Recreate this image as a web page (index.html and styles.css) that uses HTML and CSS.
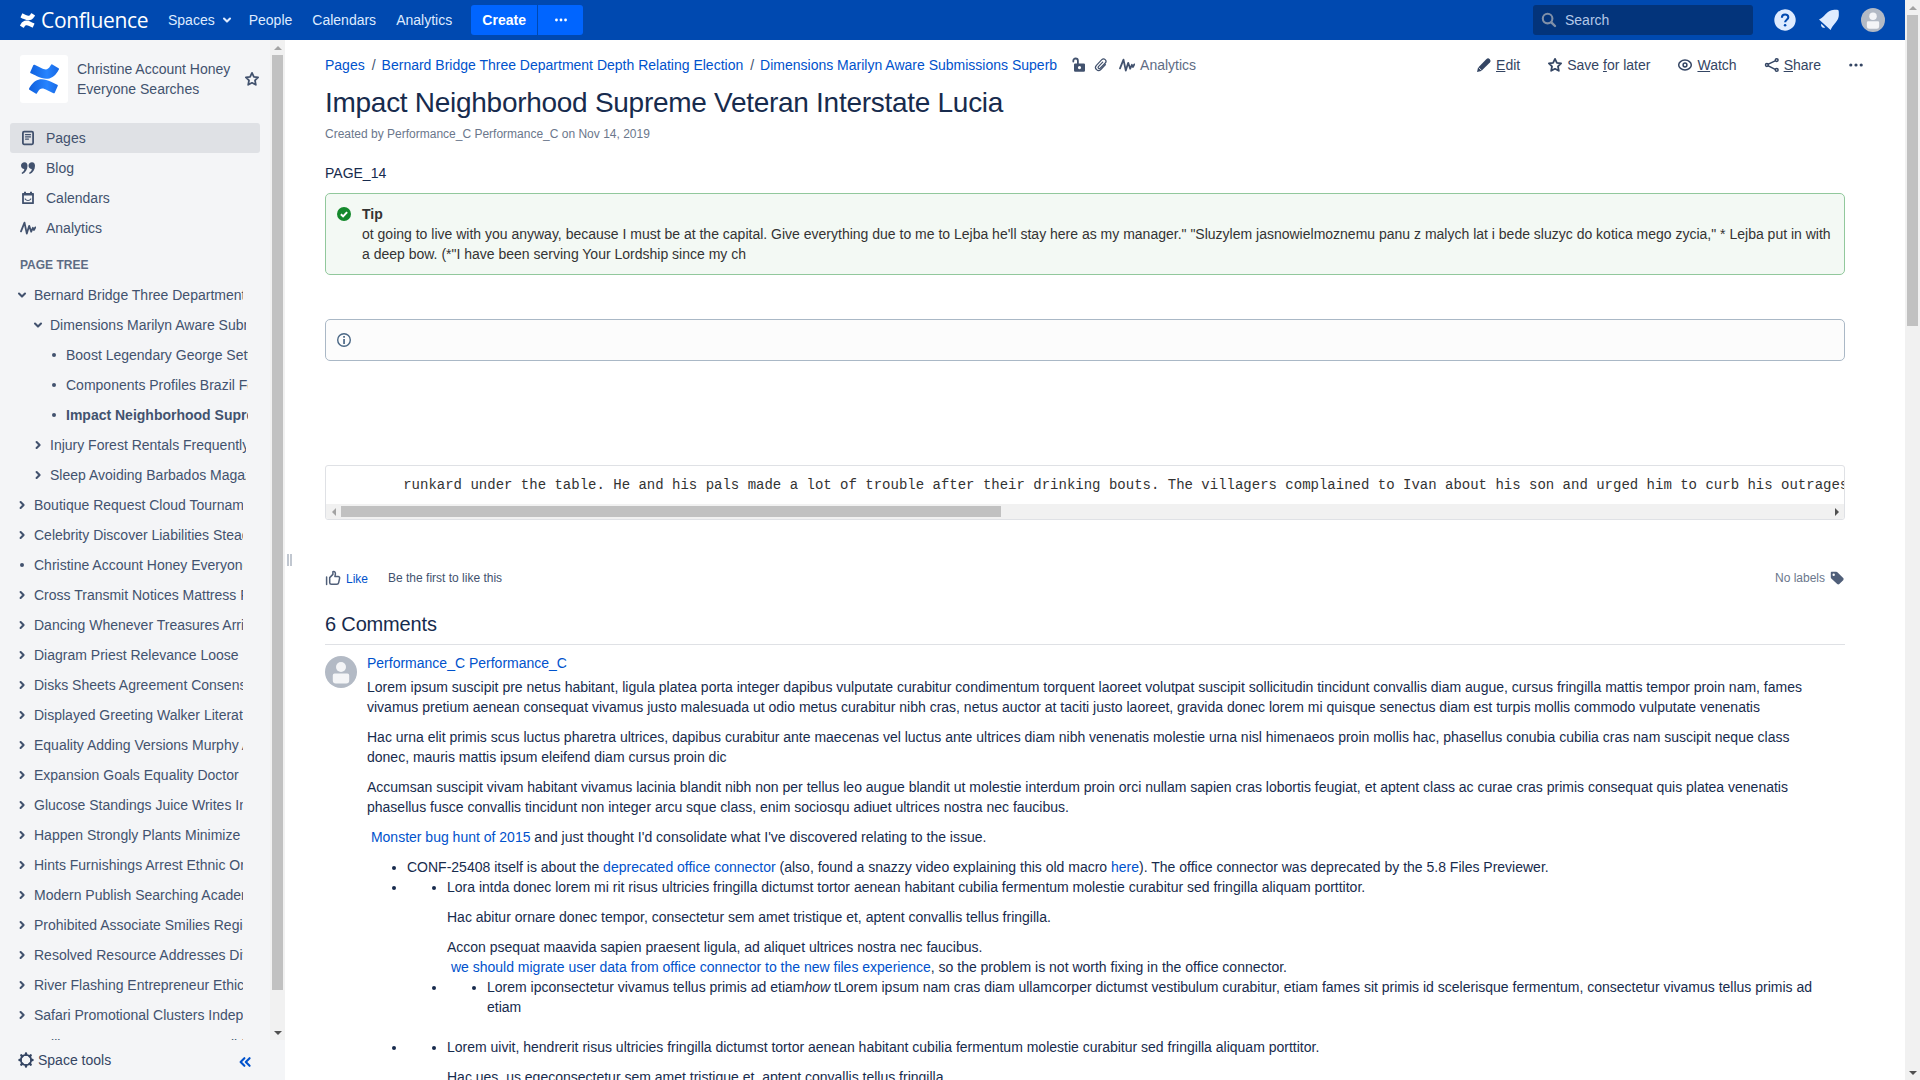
FILE: index.html
```
<!DOCTYPE html>
<html lang="en">
<head>
<meta charset="utf-8">
<title>Impact Neighborhood Supreme Veteran Interstate Lucia - Confluence</title>
<link rel="stylesheet" href="styles.css">
</head>
<body>
<svg class="defs" aria-hidden="true">
  <defs>
    <linearGradient id="blueTop" x1="0" x2="1"><stop offset="0" stop-color="#0f5fdc"/><stop offset=".6" stop-color="#2684ff"/><stop offset="1" stop-color="#1868e3"/></linearGradient>
    <symbol id="confluence" viewBox="0 0 24 24"><path d="M.87 18.257c-.248.382-.53.875-.763 1.245a.764.764 0 0 0 .255 1.04l4.965 3.054a.764.764 0 0 0 1.058-.26c.199-.332.454-.763.733-1.221 1.967-3.247 3.945-2.853 7.508-1.146l4.957 2.337a.764.764 0 0 0 1.028-.382l2.364-5.346a.764.764 0 0 0-.382-1 599.851 599.851 0 0 1-4.965-2.361C10.911 10.97 5.224 11.185.87 18.257zM23.131 5.743c.249-.405.531-.875.764-1.25a.764.764 0 0 0-.256-1.034L18.675.404a.764.764 0 0 0-1.058.26c-.195.335-.451.763-.734 1.225-1.966 3.246-3.945 2.85-7.508 1.146L4.437.694a.764.764 0 0 0-1.027.382L1.046 6.422a.764.764 0 0 0 .382 1c1.039.49 3.105 1.467 4.965 2.361 6.698 3.246 12.392 3.029 16.738-4.04z"/></symbol>
    <symbol id="down" viewBox="0 0 16 16"><path class="line bold" d="M5 6.600l3 3 3-3"/></symbol>
    <symbol id="right" viewBox="0 0 16 16"><path class="line bold" d="M6.600 5l3 3-3 3"/></symbol>
    <symbol id="dot" viewBox="0 0 16 16"><circle cx="8" cy="8" r="2"/></symbol>
    <symbol id="dots" viewBox="0 0 16 16"><circle cx="2.8" cy="8" r="1.6"/><circle cx="8" cy="8" r="1.6"/><circle cx="13.2" cy="8" r="1.6"/></symbol>
    <symbol id="star" viewBox="0 0 16 16"><path class="line" d="M8 1.9l1.9 3.9 4.2.6-3.1 3 .8 4.4L8 11.8l-3.8 2 .8-4.4-3.1-3 4.2-.6z"/></symbol>
    <symbol id="page" viewBox="0 0 16 16"><rect class="line" x="2.900" y="1.700" width="10.200" height="12.600" rx="1.200"/><path class="thin" d="M5.500 4.700h5M5.500 6.900h5M5.500 9.100h3"/></symbol>
    <symbol id="quote" viewBox="0 0 16 16"><path d="M4.500 2.200C6.500 2.200 7.500 3.700 7.500 5.800c0 3.800-2 6.900-5.200 8.200L1.500 12.900c1.700-1.100 2.700-2.300 2.800-3.900C2.500 9 1 7.700 1 5.600 1 3.600 2.600 2.200 4.500 2.200zM12 2.200c2 0 3 1.500 3 3.600 0 3.800-2 6.900-5.200 8.200L9 12.900c1.700-1.100 2.700-2.300 2.800-3.900-1.800 0-3.300-1.300-3.300-3.400 0-2 1.600-3.400 3.500-3.400z"/></symbol>
    <symbol id="calendar" viewBox="0 0 16 16"><path class="line" d="M3 4h10v9.200H3z"/><path d="M2.400 3.200h11.200v2.400H2.400zM4 1.800h2v2H4zM10 1.800h2v2h-2z"/><path class="thin" d="M5.200 9c1.200 2 4.400 2 5.600 0"/></symbol>
    <symbol id="wave" viewBox="0 0 16 16"><path class="line" d="M1 11.300L4.500 2.600 6.800 13.600 9.200 5.800l2 5.900 1.700-3.900 1 2.200 1.400-2.600"/></symbol>
    <symbol id="gear" viewBox="0 0 16 16"><circle class="line" cx="8" cy="8" r="5.200"/><path class="teeth" d="M8 1.500v1.200M8 13.300v1.200M1.500 8h1.200M13.300 8h1.200M3.300 3.300l1 1M11.700 11.700l1 1M3.300 12.700l1-1M11.700 4.300l1-1"/></symbol>
    <symbol id="collapse" viewBox="0 0 16 16"><path class="line bold" d="M7.400 4.200L3.600 8l3.800 3.800M12.600 4.200L8.800 8l3.800 3.800"/></symbol>
    <symbol id="search" viewBox="0 0 16 16"><circle class="line bold" cx="6.600" cy="6.600" r="4.800"/><path class="teeth" d="M10.600 10.600l3.400 3.400"/></symbol>
    <symbol id="lock" viewBox="0 0 16 16"><path class="line" d="M2.300 4.600V3.800a2.300 2.300 0 0 1 4.600 0V7"/><path fill-rule="evenodd" d="M4.200 6.400h8.600a1.200 1.200 0 0 1 1.200 1.200v6a1.200 1.200 0 0 1-1.200 1.200H4.200A1.200 1.200 0 0 1 3 13.600v-6a1.200 1.200 0 0 1 1.200-1.200zM8.500 9a1.600 1.600 0 1 0 0 3.200 1.600 1.600 0 0 0 0-3.200z"/></symbol>
    <symbol id="clip" viewBox="0 0 16 16"><path class="thin" d="M12.500 7.600L7.800 12.500a3 3 0 0 1-4.400-4.200l5.400-5.600a2.400 2.400 0 0 1 3.500 3.300L7.200 11.200a1.200 1.200 0 0 1-1.800-1.600l4.300-4.500"/></symbol>
    <symbol id="pencil" viewBox="0 0 16 16"><path d="M1 15l1-4.300L10.500 2.100a2.200 2.200 0 0 1 3.100 0l.3.300a2.200 2.200 0 0 1 0 3.100L5.300 14z"/><path d="M2.600 10.500l3 3" stroke="#fff" stroke-width=".8"/></symbol>
    <symbol id="eye" viewBox="0 0 16 16"><ellipse class="line fine" cx="8" cy="8" rx="6.300" ry="4.900"/><circle class="line fine" cx="8" cy="8" r="1.900"/></symbol>
    <symbol id="share" viewBox="0 0 16 16"><path class="line fine" d="M4.300 7.200l6.900-3.400M4.300 8.800l6.900 3.500"/><circle class="line fine" cx="2.900" cy="8" r="1.400"/><circle class="line fine" cx="12.700" cy="3.100" r="1.400"/><circle class="line fine" cx="12.700" cy="12.900" r="1.400"/></symbol>
    <symbol id="like" viewBox="0 0 16 16"><path class="line fine" d="M1.600 7v7.600M4.700 12.800V7.600L7.900 4.400V1.700c1.700-.7 2.700.8 2.500 2.300L9.900 6.600h3.200c1.300 0 1.700.9 1.500 1.800l-1 4.500c-.2.900-.8 1.400-1.700 1.400H6.400c-1 0-1.700-.6-1.700-1.500z"/></symbol>
    <symbol id="tag" viewBox="0 0 16 16"><path fill-rule="evenodd" d="M2.800 1.800h4.400c.5 0 .9.200 1.200.5l5.800 5.800c.6.600.6 1.500 0 2.100l-3.900 3.900c-.6.600-1.500.6-2.100 0L2.300 8.500a1.700 1.700 0 0 1-.5-1.200V2.800c0-.6.400-1 1-1zM4.700 3.500a1.200 1.200 0 1 0 0 2.400 1.200 1.200 0 0 0 0-2.400z"/></symbol>
    <symbol id="avatar" viewBox="0 0 32 32"><circle cx="16" cy="16" r="16" fill="#b3bac5"/><circle cx="16" cy="11" r="5" fill="#f4f5f7"/><path fill="#f4f5f7" d="M9.500 17.500h13a1.700 1.700 0 0 1 1.700 1.700v5.300a3 3 0 0 1-3 3H10.800a3 3 0 0 1-3-3v-5.300a1.700 1.700 0 0 1 1.700-1.700z"/></symbol>
  </defs>
</svg>

<div class="viewport">
  <div class="app">
    <header class="topbar">
      <a class="brand"><svg class="brand-mark"><use href="#confluence"/></svg><span>Confluence</span></a>
      <nav class="topnav">
        <a>Spaces<svg class="icon"><use href="#down"/></svg></a>
        <a>People</a><a>Calendars</a><a>Analytics</a>
      </nav>
      <div class="create"><a class="create-main">Create</a><a class="create-more"><svg class="icon"><use href="#dots"/></svg></a></div>
      <div class="tools">
        <div class="search"><svg class="icon"><use href="#search"/></svg><span>Search</span></div>
        <svg class="tool-icon help" viewBox="0 0 24 24"><circle cx="12" cy="12" r="10.700"/><path d="M8.900 9.700c0-4.300 6.400-4.200 6.400-.4 0 2.400-3.200 2.500-3.200 5" fill="none" stroke="#0049b0" stroke-width="2.100"/><circle cx="12.100" cy="17.300" r="1.300" fill="#0049b0"/></svg>
        <svg class="tool-icon bell" viewBox="0 0 24 24"><path d="M2 11.400C7.500 9.300 9 3.500 14.500 2.200c2-.5 3.700-.2 5.200-.4l1.600.3.500 1.600c-.1 1.500.3 3.200-.2 5.200-1.300 5.500-6 7.500-8 13.100zM4.400 15.800l3.800 3.600c-2.200 1.600-5-1.200-3.800-3.600z"/></svg>
        <svg class="tool-icon user"><use href="#avatar"/></svg>
      </div>
    </header>

    <div class="body">
      <aside class="sidebar">
        <div class="side-scroll">
          <div class="side-content">
            <div class="space">
              <div class="space-logo"><svg><use href="#confluence"/></svg></div>
              <div class="space-name">Christine Account Honey Everyone Searches</div>
              <svg class="icon"><use href="#star"/></svg>
            </div>
            <nav class="side-nav">
              <a class="selected"><svg class="icon"><use href="#page"/></svg>Pages</a>
              <a><svg class="icon"><use href="#quote"/></svg>Blog</a>
              <a><svg class="icon"><use href="#calendar"/></svg>Calendars</a>
              <a><svg class="icon"><use href="#wave"/></svg>Analytics</a>
            </nav>
            <h5 class="tree-title">PAGE TREE</h5>
            <div class="tree">
              <div class="node"><svg class="icon"><use href="#down"/></svg><span>Bernard Bridge Three Department Depth</span></div>
              <div class="node l1"><svg class="icon"><use href="#down"/></svg><span>Dimensions Marilyn Aware Submissions</span></div>
              <div class="node l2"><svg class="icon"><use href="#dot"/></svg><span>Boost Legendary George Settings</span></div>
              <div class="node l2"><svg class="icon"><use href="#dot"/></svg><span>Components Profiles Brazil Forum</span></div>
              <div class="node l2 current"><svg class="icon"><use href="#dot"/></svg><span>Impact Neighborhood Supreme Veteran</span></div>
              <div class="node l1"><svg class="icon"><use href="#right"/></svg><span>Injury Forest Rentals Frequently</span></div>
              <div class="node l1"><svg class="icon"><use href="#right"/></svg><span>Sleep Avoiding Barbados Magazine</span></div>
              <div class="node"><svg class="icon"><use href="#right"/></svg><span>Boutique Request Cloud Tournament</span></div>
              <div class="node"><svg class="icon"><use href="#right"/></svg><span>Celebrity Discover Liabilities Steady</span></div>
              <div class="node"><svg class="icon"><use href="#dot"/></svg><span>Christine Account Honey Everyone</span></div>
              <div class="node"><svg class="icon"><use href="#right"/></svg><span>Cross Transmit Notices Mattress Fully</span></div>
              <div class="node"><svg class="icon"><use href="#right"/></svg><span>Dancing Whenever Treasures Arrival</span></div>
              <div class="node"><svg class="icon"><use href="#right"/></svg><span>Diagram Priest Relevance Loose</span></div>
              <div class="node"><svg class="icon"><use href="#right"/></svg><span>Disks Sheets Agreement Consensus</span></div>
              <div class="node"><svg class="icon"><use href="#right"/></svg><span>Displayed Greeting Walker Literature</span></div>
              <div class="node"><svg class="icon"><use href="#right"/></svg><span>Equality Adding Versions Murphy April</span></div>
              <div class="node"><svg class="icon"><use href="#right"/></svg><span>Expansion Goals Equality Doctor</span></div>
              <div class="node"><svg class="icon"><use href="#right"/></svg><span>Glucose Standings Juice Writes Inner</span></div>
              <div class="node"><svg class="icon"><use href="#right"/></svg><span>Happen Strongly Plants Minimize</span></div>
              <div class="node"><svg class="icon"><use href="#right"/></svg><span>Hints Furnishings Arrest Ethnic Origin</span></div>
              <div class="node"><svg class="icon"><use href="#right"/></svg><span>Modern Publish Searching Academy</span></div>
              <div class="node"><svg class="icon"><use href="#right"/></svg><span>Prohibited Associate Smilies Region</span></div>
              <div class="node"><svg class="icon"><use href="#right"/></svg><span>Resolved Resource Addresses Divide</span></div>
              <div class="node"><svg class="icon"><use href="#right"/></svg><span>River Flashing Entrepreneur Ethics</span></div>
              <div class="node"><svg class="icon"><use href="#right"/></svg><span>Safari Promotional Clusters Independent</span></div>
              <div class="node"><svg class="icon"><use href="#right"/></svg><span>Selling Resources Scanners Solid</span></div>
            </div>
          </div>
          <div class="vbar side-bar"><i class="arrow up"></i><i class="thumb"></i><i class="arrow downward"></i></div>
        </div>
        <div class="side-footer"><svg class="icon"><use href="#gear"/></svg><span>Space tools</span><svg class="icon collapse"><use href="#collapse"/></svg></div>
      </aside>
      <div class="splitter"><i></i><i></i></div>

      <main class="main">
        <div class="page-head">
          <div class="crumbs">
            <a>Pages</a><b>/</b><a>Bernard Bridge Three Department Depth Relating Election</a><b>/</b><a>Dimensions Marilyn Aware Submissions Superb</a>
            <svg class="icon lock"><use href="#lock"/></svg><svg class="icon clip"><use href="#clip"/></svg><svg class="icon wave"><use href="#wave"/></svg><span class="stat">Analytics</span>
          </div>
          <div class="actions">
            <a><svg class="icon"><use href="#pencil"/></svg><span><u>E</u>dit</span></a>
            <a><svg class="icon"><use href="#star"/></svg><span>Save <u>f</u>or later</span></a>
            <a><svg class="icon"><use href="#eye"/></svg><span><u>W</u>atch</span></a>
            <a><svg class="icon"><use href="#share"/></svg><span><u>S</u>hare</span></a>
            <a><svg class="icon"><use href="#dots"/></svg></a>
          </div>
        </div>
        <h1>Impact Neighborhood Supreme Veteran Interstate Lucia</h1>
        <div class="meta">Created by Performance_C Performance_C on Nov 14, 2019</div>
        <p class="intro">PAGE_14</p>
        <div class="panel tip">
          <svg class="icon" viewBox="0 0 16 16"><circle cx="8" cy="8" r="7" fill="#14892c"/><path d="M4.900 8.200l2.200 2.200 4-4.300" fill="none" stroke="#fff" stroke-width="2"/></svg>
          <div><strong>Tip</strong><p>ot going to live with you anyway, because I must be at the capital. Give everything due to me to Lejba he'll stay here as my manager." "Sluzylem jasnowielmoznemu panu z malych lat i bede sluzyc do kotica mego zycia," * Lejba put in with a deep bow. (*"I have been serving Your Lordship since my ch</p></div>
        </div>
        <div class="panel info">
          <svg class="icon" viewBox="0 0 16 16"><circle cx="8" cy="8" r="6.300" fill="none" stroke="#4a6785" stroke-width="1.400"/><path d="M7.200 7h1.700v5H7.200zM7.200 4h1.700v1.800H7.200z" fill="#4a6785"/></svg>
        </div>
        <div class="code">
          <pre>        runkard under the table. He and his pals made a lot of trouble after their drinking bouts. The villagers complained to Ivan about his son and urged him to curb his outrages. </pre>
          <div class="hbar"><i class="arrow back"></i><i class="thumb"></i><i class="arrow forward"></i></div>
        </div>
        <div class="likes">
          <svg class="icon"><use href="#like"/></svg><a>Like</a><span>Be the first to like this</span>
          <div class="labels">No labels<svg class="icon"><use href="#tag"/></svg></div>
        </div>
        <h2>6 Comments</h2>
        <article class="comment">
          <svg class="avatar"><use href="#avatar"/></svg>
          <div class="comment-body">
            <a class="author">Performance_C Performance_C</a>
            <p>Lorem ipsum suscipit pre netus habitant, ligula platea porta integer dapibus vulputate curabitur condimentum torquent laoreet volutpat suscipit sollicitudin tincidunt convallis diam augue, cursus fringilla mattis tempor proin nam, fames vivamus pretium aenean consequat vivamus justo malesuada ut odio metus curabitur nibh cras, netus auctor at taciti justo laoreet, gravida donec lorem mi quisque senectus diam est turpis mollis commodo vulputate venenatis</p>
            <p>Hac urna elit primis scus luctus pharetra ultrices, dapibus curabitur ante maecenas vel luctus ante ultrices diam nibh venenatis molestie urna nisl himenaeos proin mollis hac, phasellus conubia cubilia cras nam suscipit neque class donec, mauris mattis ipsum eleifend diam cursus proin dic</p>
            <p>Accumsan suscipit vivam habitant vivamus lacinia blandit nibh non per tellus leo augue blandit ut molestie interdum proin orci nullam sapien cras lobortis feugiat, et aptent class ac curae cras primis consequat quis platea venenatis phasellus fusce convallis tincidunt non integer arcu sque class, enim sociosqu adiuet ultrices nostra nec faucibus.</p>
            <p>&nbsp;<a>Monster bug hunt of 2015</a> and just thought I'd consolidate what I've discovered relating to the issue.</p>
            <ul>
              <li>CONF-25408 itself is about the <a>deprecated office connector</a> (also, found a snazzy video explaining this old macro <a>here</a>). The office connector was deprecated by the 5.8 Files Previewer.</li>
              <li><ul>
                <li>Lora intda donec lorem mi rit risus ultricies fringilla dictumst tortor aenean habitant cubilia fermentum molestie curabitur sed fringilla aliquam porttitor.
                  <p>Hac abitur ornare donec tempor, consectetur sem amet tristique et, aptent convallis tellus fringilla.</p>
                  <p>Accon psequat maavida sapien praesent ligula, ad aliquet ultrices nostra nec faucibus.<br>&nbsp;<a>we should migrate user data from office connector to the new files experience</a>, so the problem is not worth fixing in the office connector.</p></li>
                <li class="spaced"><ul>
                  <li>Lorem ipconsectetur vivamus tellus primis ad etiam<em>how</em> tLorem ipsum nam cras diam ullamcorper dictumst vestibulum curabitur, etiam fames sit primis id scelerisque fermentum, consectetur vivamus tellus primis ad etiam</li>
                </ul></li>
              </ul></li>
              <li><ul>
                <li>Lorem uivit, hendrerit risus ultricies fringilla dictumst tortor aenean habitant cubilia fermentum molestie curabitur sed fringilla aliquam porttitor.
                  <p>Hac ues, us egeconsectetur sem amet tristique et, aptent convallis tellus fringilla.</p></li>
              </ul></li>
            </ul>
          </div>
        </article>
      </main>
    </div>
  </div>
  <div class="vbar page-bar"><i class="arrow up"></i><i class="thumb"></i><i class="arrow downward"></i></div>
</div>
</body>
</html>
```
FILE: styles.css
```
* { box-sizing: border-box; }
body {
  margin: 0;
  overflow: hidden;
  background: #fff;
  color: #172b4d;
  font: 14px/20px "Liberation Sans", Arial, sans-serif;
}
p, ul, h1, h2, h5, pre { margin: 0; }
a { color: #0052cc; text-decoration: none; }
.defs { display: block; width: 0; height: 0; }

.icon { width: 16px; height: 16px; flex: none; fill: currentColor; }
.line { fill: none; stroke: currentColor; stroke-width: 1.8; stroke-linejoin: round; stroke-linecap: round; }
.line.bold { stroke-width: 2.1; }
.line.fine { stroke-width: 1.5; }
.thin { fill: none; stroke: currentColor; stroke-width: 1.2; stroke-linecap: round; }
.teeth { fill: none; stroke: currentColor; stroke-width: 2.4; stroke-linecap: round; }

.viewport { display: flex; height: 1080px; }
.app { flex: 1; min-width: 0; display: flex; flex-direction: column; }

/* scroll bars */
.vbar { width: 15px; flex: none; background: #f1f1f1; display: flex; flex-direction: column; align-items: center; }
.vbar .thumb { width: 11px; background: #c1c1c1; }
.page-bar .thumb { height: 311px; }
.side-bar .thumb { height: 935px; }
.arrow { flex: none; width: 15px; height: 15px; display: flex; align-items: center; justify-content: center; }
.arrow::before { content: ""; border: 4px solid transparent; }
.arrow.up::before { border-top: 0; border-bottom-color: #a3a3a3; }
.arrow.downward { margin-top: auto; }
.arrow.downward::before { border-bottom: 0; border-top-color: #505050; }
.arrow.back::before { border-left: 0; border-right-color: #a3a3a3; }
.arrow.forward { margin-left: auto; }
.arrow.forward::before { border-right: 0; border-left-color: #505050; }

/* header */
.topbar { height: 40px; flex: none; background: #0049b0; display: flex; align-items: center; padding: 0 20px; color: #deebff; }
.topbar a { color: #deebff; }
.brand { display: flex; align-items: center; gap: 6px; width: 148px; }
.brand-mark { width: 15px; height: 15px; fill: #fff; flex: none; }
.brand span { font: 21px/24px "Open Sans", sans-serif; letter-spacing: -0.32px; color: #fff; }
.topnav { display: flex; gap: 20px; }
.topnav a { display: flex; align-items: center; }
.topnav .icon { margin: 0 -6px 0 4px; }
.create { display: flex; gap: 1px; margin-left: 19px; }
.create a { height: 30px; background: #0065ff; color: #fff; font-weight: bold; display: flex; align-items: center; justify-content: center; }
.create-main { width: 66px; border-radius: 3px 0 0 3px; }
.create-more { width: 45px; border-radius: 0 3px 3px 0; }
.create-more .icon { width: 14px; height: 14px; }
.tools { margin-left: auto; display: flex; align-items: center; gap: 20px; }
.search { width: 220px; height: 30px; border-radius: 3px; background: #03347b; display: flex; align-items: center; gap: 8px; padding-left: 8px; color: #b3c8e8; }
.search .icon { color: #8090a8; }
.tool-icon { width: 24px; height: 24px; fill: #deebff; }

/* sidebar */
.body { display: flex; flex: 1; min-height: 0; }
.sidebar { width: 285px; flex: none; background: #f4f5f7; color: #42526e; display: flex; flex-direction: column; }
.side-scroll { display: flex; height: 1000px; overflow: hidden; }
.side-content { flex: 1; min-width: 0; }
.space { display: flex; align-items: center; padding: 15px 10px 0 20px; height: 63px; }
.space-logo { width: 48px; height: 48px; flex: none; border-radius: 3px; background: #fff; display: flex; align-items: center; justify-content: center; }
.space-logo svg { width: 30px; height: 30px; fill: url(#blueTop); }
.space-name { width: 160px; margin: 0 7px 0 9px; }
.side-nav { padding: 20px 10px 0; }
.side-nav a { display: flex; align-items: center; gap: 10px; height: 30px; padding-left: 10px; border-radius: 3px; color: #42526e; }
.side-nav .selected { background: #dfe1e5; }
.tree-title { font-size: 12px; line-height: 20px; color: #5e6c84; padding: 12px 0 5px 20px; }
.tree { width: 243px; }
.node { display: flex; align-items: center; height: 30px; padding-left: 14px; }
.node span { margin-left: 4px; min-width: 0; flex: 1; overflow: hidden; white-space: nowrap; }
.node.l1 { padding-left: 30px; margin-right: -3px; }
.node.l2 { padding-left: 46px; margin-right: -5px; }
.node.current { font-weight: bold; }
.side-footer { flex: 1; display: flex; align-items: center; padding: 0 32px 0 18px; gap: 4px; color: #344563; }
.collapse { color: #0052cc; margin: 4px 0 0 auto; }
.splitter { width: 7px; flex: none; display: flex; align-items: center; justify-content: flex-end; gap: 1px; }
.splitter i { width: 2px; height: 12px; background: #c1c7d0; }

/* page */
.main { flex: 1; min-width: 0; padding: 0 60px 0 33px; overflow: hidden; }
.page-head { display: flex; justify-content: space-between; margin: 15px -19px 0 0; }
.crumbs { display: flex; align-items: center; color: #5e6c84; }
.crumbs b { font-weight: normal; color: #42526e; margin: 0 6px 0 7px; }
.crumbs .icon { color: #42526e; }
.crumbs .lock { margin-left: 14px; }
.crumbs .clip { margin-left: 6px; }
.crumbs .wave { margin-left: 10px; }
.stat { margin-left: 5px; }
.actions { display: flex; gap: 27px; }
.actions a { display: flex; align-items: center; gap: 4px; color: #344563; }
h1 { font-size: 28px; font-weight: normal; line-height: 32px; letter-spacing: -0.28px; margin-top: 12px; }
.meta { font-size: 12px; color: #6b778c; margin-top: 5px; }
.intro { margin: 19px 0 10px; }
.panel { display: flex; border: 1px solid; border-radius: 5px; padding: 10px; gap: 10px; color: #333; }
.panel .icon { margin-top: 2px; }
.tip { background: #f3f9f4; border-color: #91c89c; height: 82px; }
.tip strong { display: block; }
.info { background: #fcfcfc; border-color: #aab8c6; height: 42px; margin-top: 44px; }
.code { margin-top: 104px; border: 1px solid #dfe1e5; border-radius: 3px; height: 55px; overflow: hidden; }
.code pre { font: 14px/20px "Liberation Mono", monospace; color: #333; padding: 9px 10px; overflow: hidden; }
.hbar { height: 15px; background: #f1f1f1; display: flex; align-items: center; }
.hbar .thumb { width: 660px; height: 11px; background: #c1c1c1; }
.likes { display: flex; align-items: center; height: 20px; margin-top: 48px; font-size: 12px; color: #42526e; }
.likes a { margin: 1px 20px 0 5px; }
.likes .icon { color: #505f79; }
.labels { margin-left: auto; display: flex; align-items: center; gap: 4px; color: #6b778c; }
h2 { font-size: 20px; font-weight: normal; line-height: 24px; letter-spacing: -0.16px; margin-top: 24px; padding-bottom: 8px; border-bottom: 1px solid #dfe1e5; }
.comment { display: flex; gap: 10px; padding-top: 8px; }
.comment .avatar { width: 32px; height: 32px; flex: none; margin-top: 3px; }
.comment-body { flex: 1; padding-right: 10px; }
.author { display: block; margin-bottom: 4px; }
.comment-body p { margin-bottom: 10px; }
.comment-body ul { padding-left: 40px; list-style: disc; }
.comment-body li > p { margin: 10px 0 0; }
.comment-body .spaced { padding-bottom: 20px; }
```
